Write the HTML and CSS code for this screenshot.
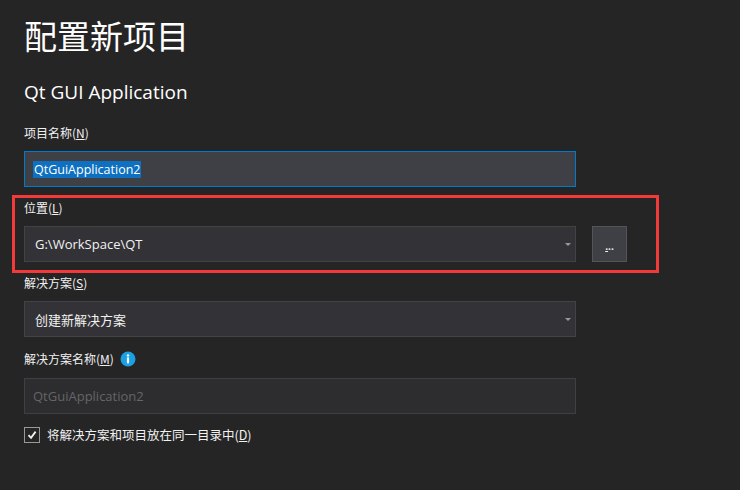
FILE: index.html
```html
<!DOCTYPE html>
<html lang="zh-CN">
<head>
<meta charset="utf-8">
<title>配置新项目</title>
<link rel="stylesheet" href="styles.css">
</head>
<body>
<div class="page">
  <h1 class="title">配置新项目</h1>
  <h2 class="subtitle">Qt GUI Application</h2>

  <div class="field">
    <div class="label">项目名称(<u>N</u>)</div>
    <div class="input input-focus"><span class="selected">QtGuiApplication2</span></div>
  </div>

  <div class="field">
    <div class="label">位置(<u>L</u>)</div>
    <div class="row">
      <div class="input input-combo">G:\WorkSpace\QT<span class="arrow"></span></div>
      <div class="browse"><span class="dots"><u>.</u>..</span></div>
    </div>
    <div class="highlight"></div>
  </div>

  <div class="field">
    <div class="label">解决方案(<u>S</u>)</div>
    <div class="input input-combo">创建新解决方案<span class="arrow"></span></div>
  </div>

  <div class="field">
    <div class="label label-icon"><span>解决方案名称(<u>M</u>)</span>
      <svg class="info" width="16" height="16" viewBox="0 0 16 16"><circle cx="8" cy="8" r="7.5" fill="#1ba1e2"/><circle cx="8" cy="4.4" r="1.2" fill="#fff"/><rect x="6.9" y="6.4" width="2.2" height="6" fill="#fff"/></svg>
    </div>
    <div class="input input-disabled">QtGuiApplication2</div>
  </div>

  <div class="check">
    <span class="box"><svg width="14" height="14" viewBox="0 0 14 14"><path d="M3.5 7.2 L6 9.8 L10.6 3.6" fill="none" stroke="#f1f1f1" stroke-width="1.8"/></svg></span>
    <span class="check-label">将解决方案和项目放在同一目录中(<u>D</u>)</span>
  </div>
</div>
</body>
</html>
```
FILE: styles.css
```css
html, body {
  margin: 0;
  padding: 0;
  background: #252526;
}
body {
  width: 740px;
  height: 490px;
  overflow: hidden;
  color: #f1f1f1;
  font-family: "Open Sans", "Noto Sans CJK SC", sans-serif;
}
.page {
  padding: 15px 0 0 24px;
  position: relative;
}
.title {
  margin: 0;
  font-family: "Noto Sans CJK SC", sans-serif;
  font-weight: 400;
  font-size: 33px;
  line-height: 40px;
  color: #ffffff;
}
.subtitle {
  margin: 25px 0 0 0;
  font-weight: 400;
  font-size: 19px;
  line-height: 24px;
  color: #ffffff;
}
.field {
  position: relative;
  margin-bottom: 13px;
}
.subtitle + .field {
  margin-top: 21px;
}
.label {
  font-size: 12px;
  line-height: 16px;
  margin-bottom: 10px;
  color: #f1f1f1;
  font-family: "Noto Sans CJK SC", sans-serif;
}
.label u, .check-label u {
  text-underline-offset: 1px;
}
.label-icon {
  display: flex;
  align-items: center;
  gap: 6px;
  height: 18px;
  margin-bottom: 10px;
}
.info {
  display: block;
}
.row {
  display: flex;
  gap: 16px;
}
.input {
  box-sizing: border-box;
  width: 552px;
  height: 36px;
  padding: 0 8px;
  display: flex;
  align-items: center;
  font-size: 13px;
  font-family: "Open Sans", "Noto Sans CJK SC", sans-serif;
  position: relative;
}
.input-focus {
  background: #3f3f46;
  border: 1px solid #007acc;
  font-size: 12.5px;
}
.selected {
  background: #0e70c0;
  color: #ffffff;
  line-height: 17px;
  padding: 0 1px;
}
.input-combo {
  background: #333337;
  border: 1px solid #434346;
  padding-left: 10px;
}
.arrow {
  position: absolute;
  right: 4px;
  top: 16px;
  width: 0;
  height: 0;
  border-left: 3px solid transparent;
  border-right: 3px solid transparent;
  border-top: 3px solid #999999;
}
.input-disabled {
  background: #2d2d30;
  border: 1px solid #3f3f46;
  color: #656565;
}
.browse {
  box-sizing: border-box;
  width: 35px;
  height: 36px;
  background: #3f3f46;
  border: 1px solid #555555;
  display: flex;
  align-items: center;
  justify-content: center;
}
.dots {
  font-size: 10px;
  line-height: 10px;
  font-weight: 700;
  color: #f1f1f1;
  margin-top: 3px;
}
.highlight {
  position: absolute;
  left: -12px;
  top: -5px;
  width: 647px;
  height: 78px;
  box-sizing: border-box;
  border: 3px solid #f33a3a;
  pointer-events: none;
}
.check {
  display: flex;
  align-items: center;
  gap: 7px;
  margin-top: -2px;
}
.box {
  box-sizing: border-box;
  width: 16px;
  height: 16px;
  border: 1px solid #999999;
  display: flex;
  align-items: center;
  justify-content: center;
}
.box svg {
  display: block;
}
.check-label {
  font-size: 12.5px;
  font-family: "Noto Sans CJK SC", sans-serif;
  color: #f1f1f1;
}
```
